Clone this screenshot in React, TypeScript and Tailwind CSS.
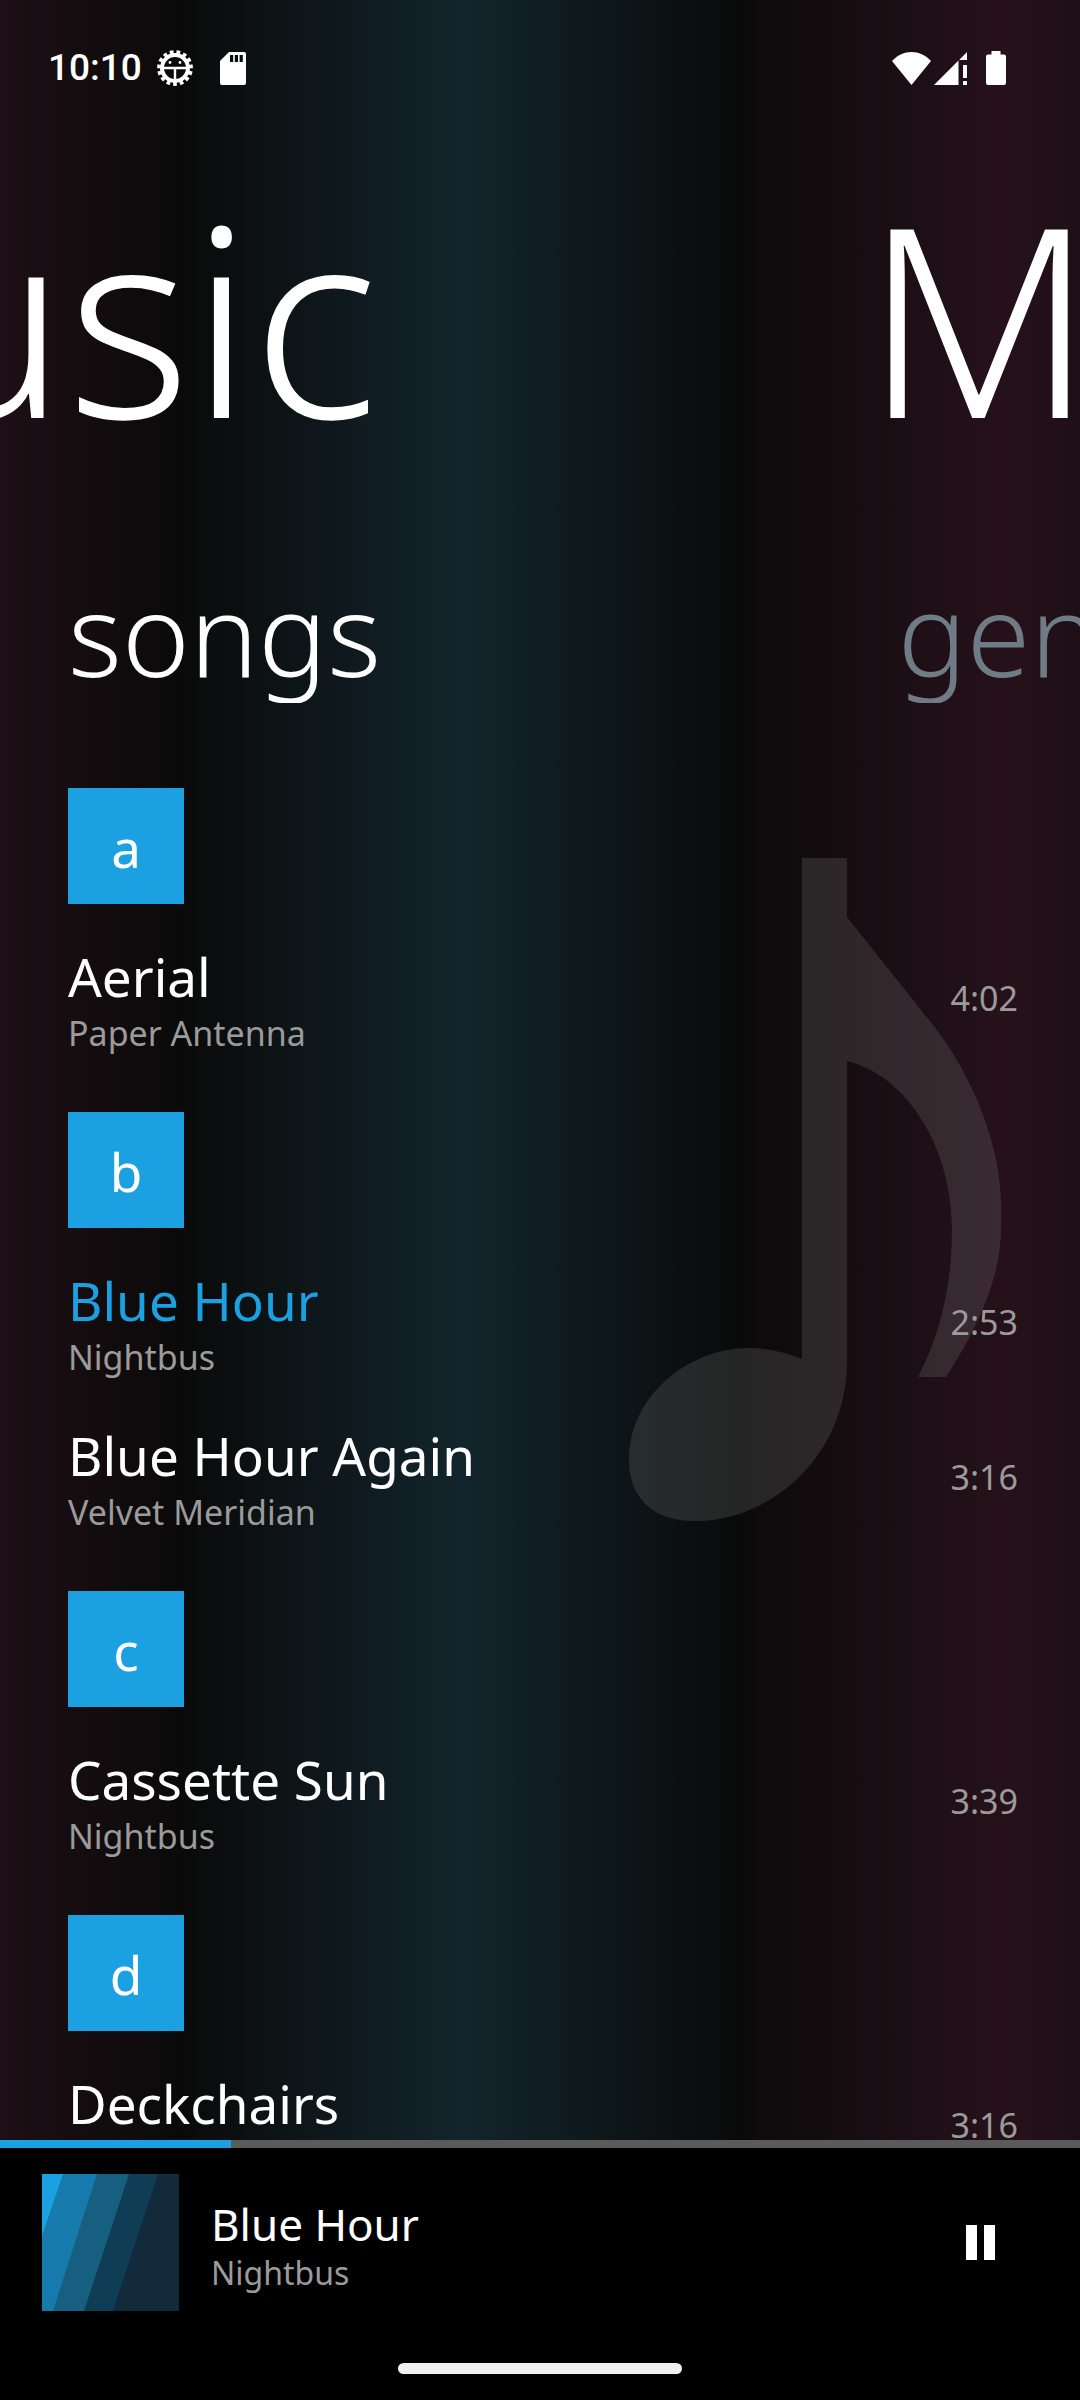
import React from "react";

type Song = { title: string; artist: string; time: string };
type Section = { letter: string; songs: Song[] };

const sections: Section[] = [
  { letter: "a", songs: [{ title: "Aerial", artist: "Paper Antenna", time: "4:02" }] },
  {
    letter: "b",
    songs: [
      { title: "Blue Hour", artist: "Nightbus", time: "2:53" },
      { title: "Blue Hour Again", artist: "Velvet Meridian", time: "3:16" },
    ],
  },
  { letter: "c", songs: [{ title: "Cassette Sun", artist: "Nightbus", time: "3:39" }] },
  { letter: "d", songs: [{ title: "Deckchairs", artist: "", time: "3:16" }] },
];

const nowPlaying = { title: "Blue Hour", artist: "Nightbus", elapsed: 37, duration: 173 };

const StatusBar: React.FC = () => (
  <div className="flex h-[136px] shrink-0 items-center justify-between pr-[74px] pl-[48px]">
    <div className="flex items-center">
      <span className="font-['Roboto',sans-serif] text-[37px] leading-[40px] font-medium">10:10</span>
      <svg className="ml-[14px] h-[38px] w-[38px]" viewBox="-19 -19 38 38" aria-hidden="true">
        <circle r="13" fill="none" stroke="#fff" strokeWidth="4" />
        <circle
          r="15.6"
          fill="none"
          stroke="#fff"
          strokeWidth="4.6"
          pathLength="30"
          strokeDasharray="1.1 0.9"
          strokeDashoffset="1.05"
        />
        <path d="M-12 0H12M0 0V12" stroke="#fff" strokeWidth="2.4" fill="none" />
        <circle cx="-5" cy="-5.5" r="1.4" fill="#fff" />
        <circle cx="5" cy="-5.5" r="1.4" fill="#fff" />
      </svg>
      <svg className="ml-[26px] h-[33px] w-[26px]" viewBox="0 0 26 33" aria-hidden="true">
        <path d="M9 0H24a2 2 0 0 1 2 2V31a2 2 0 0 1-2 2H2a2 2 0 0 1-2-2V9Z" fill="#fff" />
        <path d="M10 3h3.2v7H10zM14.8 3H18v7h-3.2zM19.6 3h3.2v7h-3.2z" fill="#0a0a0a" />
      </svg>
    </div>
    <div className="flex items-center">
      <svg className="h-[33px] w-[39px]" viewBox="0 0 39 33" fill="#fff" aria-hidden="true">
        <path d="M0 9C11 -3 28 -3 39 9L19.5 33Z" />
      </svg>
      <svg className="ml-[3px] h-[33px] w-[33px]" viewBox="0 0 33 33" fill="#fff" aria-hidden="true">
        <path d="M0 33L24.5 8.5V33ZM25.5 7.5L33 0V8H25.5ZM29 13h4v13h-4zM29 29h4v4h-4z" />
      </svg>
      <svg className="ml-[19px] h-[34px] w-[20px]" viewBox="0 0 20 34" fill="#fff" aria-hidden="true">
        <path d="M5.5 0h9v3.5H18a2 2 0 0 1 2 2V32a2 2 0 0 1-2 2H2a2 2 0 0 1-2-2V5.5a2 2 0 0 1 2-2h3.5Z" />
      </svg>
    </div>
  </div>
);

const NoteArt: React.FC = () => (
  <svg
    className="pointer-events-none absolute top-[70px] right-[78px] h-[663px] w-[373px]"
    viewBox="629 858 373 663"
    fill="#7f7f7f"
    fillOpacity="0.24"
    aria-hidden="true"
  >
    <path d="M802 858H847V917L933 1025C976 1080 1001 1150 1001 1205V1228C1001 1275 980 1325 946 1377H918C940 1335 952 1285 952 1230C952 1145 905 1075 847 1061V1362C847 1452 775 1521 695 1521C650 1521 629 1495 629 1460C629 1395 690 1348 748 1348C768 1348 785 1352 802 1359Z" />
  </svg>
);

const SongRow: React.FC<{ song: Song; active: boolean }> = ({ song, active }) => (
  <li className="flex items-center justify-between pb-[43px]">
    <div>
      <p className={`text-[53px] leading-[58px] ${active ? "text-[#1ba1e2]" : ""}`}>{song.title}</p>
      <p className="h-[54px] text-[34px] leading-[54px] text-[#9b9b9b]">{song.artist}</p>
    </div>
    <span className="pb-3 text-[34px] leading-[54px] text-[#9b9b9b]">{song.time}</span>
  </li>
);

const MiniPlayer: React.FC = () => {
  const progress = (nowPlaying.elapsed / nowPlaying.duration) * 100;

  return (
    <footer className="shrink-0 bg-black">
      <div
        className="h-2 bg-[#5b5b5b]"
        role="progressbar"
        aria-label="Playback position"
        aria-valuenow={nowPlaying.elapsed}
        aria-valuemax={nowPlaying.duration}
      >
        <div className="h-full bg-[#1ba1e2]" style={{ width: `${progress}%` }} />
      </div>
      <div className="flex items-center pt-[26px] pr-[64px] pl-[42px]">
        <svg className="h-[137px] w-[137px] shrink-0" viewBox="0 0 137 137" aria-hidden="true">
          <path d="M0 0H137V137H0Z" fill="#122a3a" />
          <path d="M0 0H116L71 137H0Z" fill="#0f3d56" />
          <path d="M0 0H87L42 137H0Z" fill="#175f80" />
          <path d="M0 0H55L11 137H0Z" fill="#167aad" />
          <path d="M0 0H21L0 62Z" fill="#1ba1e2" />
        </svg>
        <div className="ml-8 flex-1 pt-3">
          <p className="text-[44px] leading-[48px]">{nowPlaying.title}</p>
          <p className="text-[32px] leading-[50px] text-[#9b9b9b]">{nowPlaying.artist}</p>
        </div>
        <button type="button" aria-label="Pause" className="flex h-[72px] w-[72px] items-center justify-center">
          <svg className="h-[35px] w-[29px]" viewBox="0 0 29 35" fill="#fff">
            <path d="M0 0H11V35H0ZM18 0H29V35H18Z" />
          </svg>
        </button>
      </div>
      <div className="flex justify-center pt-[52px] pb-[26px]">
        <div className="h-[11px] w-[284px] rounded-full bg-[#eff1f0]" />
      </div>
    </footer>
  );
};

const App: React.FC = () => {
  return (
    <div className="flex h-screen flex-col overflow-hidden bg-[linear-gradient(90deg,#26111a_-8%,#0a0a0a_17%,#12252c_43%,#0a0a0a_68%,#26111a_93%,#0a0a0a_118%)] font-['Noto_Sans',sans-serif] text-white">
      <StatusBar />
      <h1 className="flex shrink-0 overflow-hidden pt-12 text-[264px] leading-[264px] font-light whitespace-nowrap">
        <span className="flex w-[35%] shrink-0 justify-end">Music</span>
        <span className="pl-[45%]" aria-hidden="true">
          M
        </span>
      </h1>
      <nav className="mt-[115px] flex shrink-0 overflow-hidden pl-[68px] text-[115px] leading-[140px] font-light">
        <button type="button" className="w-[82%] shrink-0 text-left">
          songs
        </button>
        <button type="button" className="text-[#6f7b85]">
          genres
        </button>
      </nav>
      <main className="relative min-h-0 flex-1 overflow-hidden">
        <div className="absolute inset-x-0 top-[85px]">
          <NoteArt />
        </div>
        <div className="relative pt-[85px] pr-[62px] pl-[68px]">
          {sections.map((section) => (
            <section key={section.letter} className="pb-[9px]">
              <button
                type="button"
                className="mb-11 flex h-[116px] w-[116px] items-center justify-center bg-[#1ba1e2] pt-1 text-[53px] leading-[58px]"
              >
                {section.letter}
              </button>
              <ul>
                {section.songs.map((song) => (
                  <SongRow key={song.title} song={song} active={song.title === nowPlaying.title} />
                ))}
              </ul>
            </section>
          ))}
        </div>
      </main>
      <MiniPlayer />
    </div>
  );
};

export default App;
